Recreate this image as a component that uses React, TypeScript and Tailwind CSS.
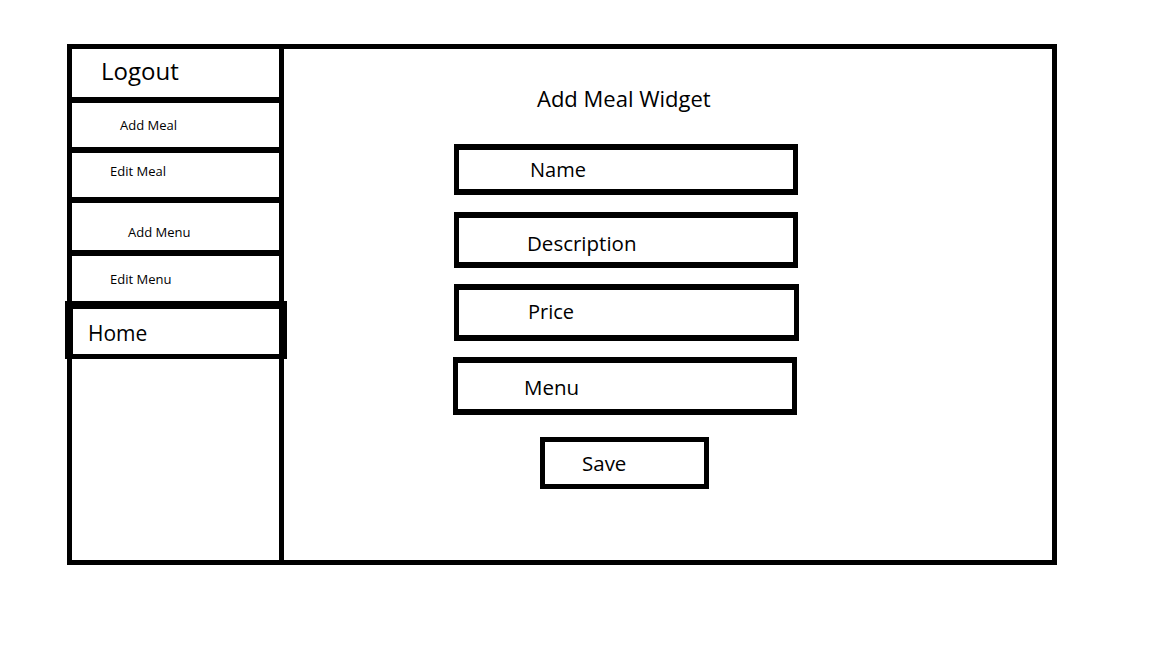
export default function App() {
  const font = { fontFamily: '"Open Sans", "Noto Sans", sans-serif' };
  return (
    <div className="w-[1152px] h-[648px] bg-white pt-[44px] pl-[67px] text-black" style={font}>
      <div className="flex w-[990px] h-[521px] border-[5px] border-black">
        {/* Sidebar */}
        <div className="w-[212px] shrink-0 border-r-[5px] border-black flex flex-col">
          <div className="h-[54px] border-b-[6px] border-black flex items-center pl-[29px] pb-[4px] text-[24px] leading-none">
            Logout
          </div>
          <div className="h-[50px] border-b-[6px] border-black flex items-center pl-[48px] pt-[1px] text-[13px] leading-none">
            Add Meal
          </div>
          <div className="h-[50px] border-b-[6px] border-black flex items-center pl-[38px] pb-[8px] text-[13px] leading-none -ml-[1px] border-l-[1px]">
            Edit Meal
          </div>
          <div className="h-[53px] border-b-[6px] border-black flex items-center pl-[56px] pt-[11px] text-[13px] leading-none">
            Add Menu
          </div>
          <div className="h-[45px] flex items-center pl-[38px] pt-[1px] text-[13px] leading-none">
            Edit Menu
          </div>
          <div className="h-[58px] -ml-[7px] -mr-[8px] border-t-[8px] border-b-[5px] border-x-[8px] border-black flex items-center pl-[15px] pt-[3px] text-[21px] leading-none">
            Home
          </div>
        </div>

        {/* Main */}
        <div className="flex-1 flex flex-col pl-[170px]">
          <div className="mt-[35px] h-[28px] leading-[28px] pl-[83px] text-[22px]">
            Add Meal Widget
          </div>
          <div className="mt-[32px] w-[344px] h-[51px] border-x-[5px] border-y-[6px] border-black flex items-center pl-[71px] text-[20px] leading-none">
            Name
          </div>
          <div className="mt-[17px] w-[344px] h-[56px] border-x-[5px] border-y-[6px] border-black flex items-center pl-[68px] pt-[7px] text-[20.5px] leading-none">
            Description
          </div>
          <div className="mt-[16px] w-[345px] h-[57px] border-x-[5px] border-y-[6px] border-black flex items-center pl-[69px] pb-[1px] text-[20px] leading-none">
            Price
          </div>
          <div className="mt-[16px] -ml-[1px] w-[344px] h-[58px] border-x-[5px] border-y-[6px] border-black flex items-center pl-[66px] pt-[3px] text-[20.5px] leading-none">
            Menu
          </div>
          <div className="mt-[22px] ml-[86px] w-[169px] h-[52px] border-[5px] border-black flex items-center pl-[37px] text-[20.5px] leading-none">
            Save
          </div>
        </div>
      </div>
    </div>
  );
}
